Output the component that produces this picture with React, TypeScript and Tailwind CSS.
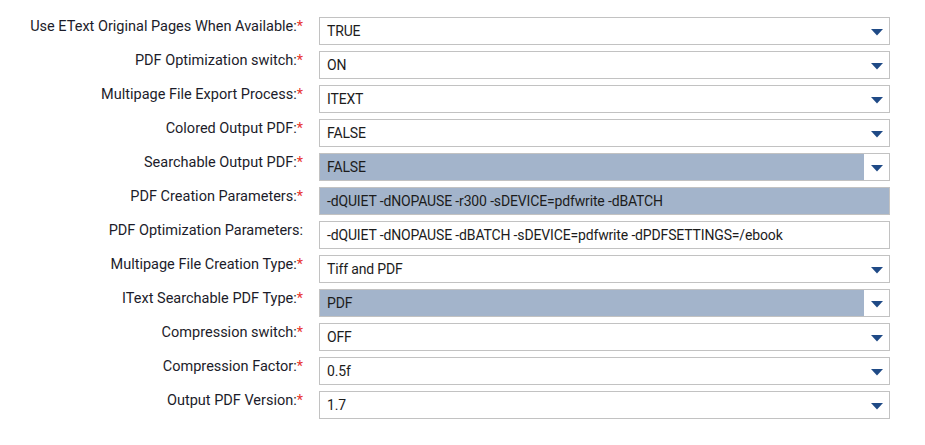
import React from 'react';

type Row = {
    label: string;
    value: string;
    required?: boolean;
    kind: 'select' | 'text';
    highlighted?: boolean;
};

const rows: Row[] = [
    { label: 'Use EText Original Pages When Available:', value: 'TRUE', required: true, kind: 'select' },
    { label: 'PDF Optimization switch:', value: 'ON', required: true, kind: 'select' },
    { label: 'Multipage File Export Process:', value: 'ITEXT', required: true, kind: 'select' },
    { label: 'Colored Output PDF:', value: 'FALSE', required: true, kind: 'select' },
    { label: 'Searchable Output PDF:', value: 'FALSE', required: true, kind: 'select', highlighted: true },
    { label: 'PDF Creation Parameters:', value: '-dQUIET -dNOPAUSE -r300 -sDEVICE=pdfwrite -dBATCH', required: true, kind: 'text', highlighted: true },
    { label: 'PDF Optimization Parameters:', value: '-dQUIET -dNOPAUSE -dBATCH -sDEVICE=pdfwrite -dPDFSETTINGS=/ebook', kind: 'text' },
    { label: 'Multipage File Creation Type:', value: 'Tiff and PDF', required: true, kind: 'select' },
    { label: 'IText Searchable PDF Type:', value: 'PDF', required: true, kind: 'select', highlighted: true },
    { label: 'Compression switch:', value: 'OFF', required: true, kind: 'select' },
    { label: 'Compression Factor:', value: '0.5f', required: true, kind: 'select' },
    { label: 'Output PDF Version:', value: '1.7', required: true, kind: 'select' },
];

const Arrow = () => (
    <svg width="12" height="7" viewBox="0 0 12 7" className="mt-[3px]">
        <path d="M0 0 H12 L6 6.5 Z" fill="#1f4a86" />
    </svg>
);

const Field = ({ row }: { row: Row }) => {
    const bg = row.highlighted ? 'bg-[#a3b4cb]' : 'bg-white';
    if (row.kind === 'text') {
        return (
            <div className={`w-[571px] h-[28px] border border-[#c2c2c2] ${bg} flex items-center pl-[7px] text-[14px] tracking-[-0.15px] text-[#1c1c1c]`}>
                {row.value}
            </div>
        );
    }
    return (
        <div className="w-[571px] h-[28px] border border-[#c2c2c2] bg-white flex">
            <div className={`flex-1 ${bg} flex items-center pl-[7px] text-[14px] tracking-[-0.15px] text-[#1c1c1c]`}>{row.value}</div>
            <div className="w-[25px] flex items-center justify-center">
                <Arrow />
            </div>
        </div>
    );
};

export default function App() {
    return (
        <div className="w-[925px] h-[445px] bg-white pt-[17px] font-['Roboto',sans-serif]">
            <div className="flex flex-col gap-[6px]">
                {rows.map((row) => (
                    <div key={row.label} className="flex items-start">
                        <div className="w-[303px] text-right text-[14.5px] leading-[16px] pt-[2px] text-[#1c1c2a] whitespace-nowrap">
                            {row.label}
                            {row.required && <span className="text-[#e8322e]">*</span>}
                        </div>
                        <div className="ml-[16px]">
                            <Field row={row} />
                        </div>
                    </div>
                ))}
            </div>
        </div>
    );
}
